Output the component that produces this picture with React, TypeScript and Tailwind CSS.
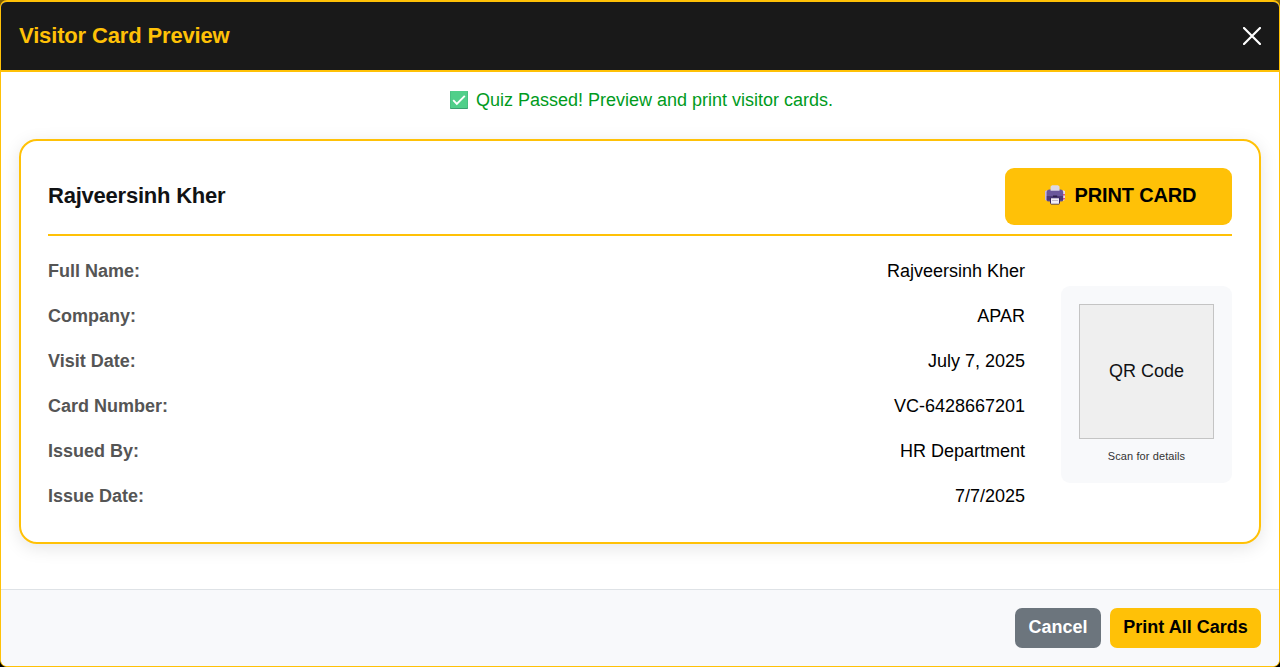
const details = [
  { label: "Full Name:", value: "Rajveersinh Kher" },
  { label: "Company:", value: "APAR" },
  { label: "Visit Date:", value: "July 7, 2025" },
  { label: "Card Number:", value: "VC-6428667201" },
  { label: "Issued By:", value: "HR Department" },
  { label: "Issue Date:", value: "7/7/2025" },
];

function CheckIcon() {
  return (
    <svg className="size-[18px] shrink-0" viewBox="0 0 18 18" aria-hidden="true">
      <rect width="18" height="18" rx="0.8" fill="#3a9f70" />
      <rect x="0.3" width="17.4" height="17" rx="0.8" fill="#50cf8a" />
      <path d="M3.2 9.2 6.8 12.8 14.8 4.8" fill="none" stroke="#fff" strokeWidth="1.9" />
    </svg>
  );
}

function PrinterIcon() {
  return (
    <svg className="h-5 w-5 shrink-0" viewBox="0 0 20 20" aria-hidden="true">
      <path d="M0 6 2.5 5V16L0 15Z" fill="#c5b8df" />
      <path d="M17.5 5 20 6V15L17.5 16Z" fill="#e5dcec" />
      <path d="M18.2 9h1.6v1.4h-1.6zM18.2 13h1.6v1.4h-1.6z" fill="#e0355e" />
      <path d="M1.6 7Q2 4.5 4 4.5H16Q18 4.5 18.2 7V15Q18 16.5 16.5 16.5H3.5Q2 16.5 1.6 15Z" fill="#6a579b" />
      <path d="M1.8 11H18V15.5H1.8Z" fill="#4d3b78" />
      <path d="M5.6 5.7V1.5L7 0.2H13L14.5 1.5V5.7Z" fill="#ddd8e7" />
      <path d="M8 10.6H12.2V12H8Z" fill="#2d204c" />
      <path d="M5 12.7H15V17.8L14 19.6H6L5 17.8Z" fill="#38265c" />
      <path d="M6 13.3H14V18.8H6Z" fill="#f1edf5" />
      <path d="M7 15.5H13" stroke="#aaa2b7" strokeWidth="0.7" />
    </svg>
  );
}

export default function App() {
  return (
    <div className="h-[667px] w-[1280px] overflow-hidden bg-linear-to-b from-[#806000] from-50% to-black to-50% font-['Liberation_Sans',sans-serif] text-lg text-[#111214]">
      <section role="dialog" aria-label="Visitor Card Preview" className="flex h-full flex-col overflow-hidden rounded-[7px] border border-t-2 border-[#ffc107] bg-white">
        <header className="flex h-[70px] shrink-0 items-center justify-between border-b-2 border-[#ffc107] bg-[#191919] px-[18px]">
          <h1 className="pb-0.5 text-[22px] leading-[27px] font-bold tracking-[-0.15px] text-[#ffc107]">Visitor Card Preview</h1>
          <button aria-label="Close" className="size-[18px]">
            <svg className="size-[18px]" viewBox="0 0 18 18" aria-hidden="true">
              <path d="m1 1 16 16M17 1 1 17" fill="none" stroke="#fff" strokeWidth="2.2" strokeLinecap="round" />
            </svg>
          </button>
        </header>

        <main className="h-[517px] shrink-0 px-[18px] pt-[14px]">
          <p className="flex h-[27px] items-center justify-center gap-2 pl-[3px] text-[#009b1d]">
            <CheckIcon />
            <span>Quiz Passed! Preview and print visitor cards.</span>
          </p>

          <article className="mt-[26px] h-[405px] rounded-[18px] border-2 border-[#ffc107] px-[27px] pt-[27px] shadow-[0_4px_18px_rgba(0,0,0,0.1)]">
            <div className="flex h-[68px] items-start justify-between border-b-2 border-[#ffc107]">
              <h2 className="mt-[14px] text-[22px] leading-[27px] font-bold tracking-[-0.22px]">Rajveersinh Kher</h2>
              <button className="flex h-[57px] w-[227px] items-center justify-center gap-[10px] rounded-[9px] bg-[#ffc107] pb-[3px] pl-1 text-xl font-bold tracking-[-0.15px] text-black">
                <PrinterIcon />
                <span>PRINT CARD</span>
              </button>
            </div>

            <div className="flex items-start gap-9 pt-3">
              <dl className="grow">
                {details.map((item) => (
                  <div key={item.label} className="flex h-[45px] items-center justify-between">
                    <dt className="font-bold text-[#555]">{item.label}</dt>
                    <dd className="text-black">{item.value}</dd>
                  </div>
                ))}
              </dl>
              <aside className="mt-[38px] flex h-[197px] w-[171px] shrink-0 flex-col items-center rounded-[9px] bg-[#f8f9fb] pt-[18px]">
                <div className="flex size-[135px] items-center justify-center border border-[#c4c4c4] bg-[#efefef] pb-0.5">QR Code</div>
                <p className="mt-[9px] text-[11px] leading-[17px] tracking-[0.1px] text-[#333]">Scan for details</p>
              </aside>
            </div>
          </article>
        </main>

        <footer className="flex grow items-start justify-end gap-[9px] border-t border-[#dee2e6] bg-[#f8f9fb] px-[18px] pt-[18px] font-bold">
          <button className="h-10 w-[86px] rounded-[7px] bg-[#6c757d] pb-0.5 text-white">Cancel</button>
          <button className="h-10 w-[151px] rounded-[7px] bg-[#ffc107] pb-0.5 text-black">Print All Cards</button>
        </footer>
      </section>
    </div>
  );
}
